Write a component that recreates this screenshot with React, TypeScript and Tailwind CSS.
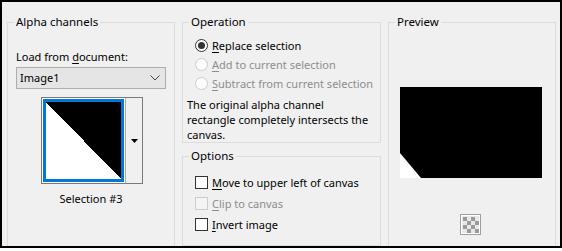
import React from "react";

function Radio({ checked, disabled, label, u }: { checked?: boolean; disabled?: boolean; label: string; u: number }) {
  return (
    <div className="flex items-center h-[19px] pl-[12px] whitespace-nowrap">
      <span
        className={
          "shrink-0 w-[13px] h-[13px] rounded-full border flex items-center justify-center " +
          (disabled ? "border-[#cccccc] bg-[#fcfcfc]" : "border-[#333333] bg-white")
        }
      >
        {checked && <span className="w-[7px] h-[7px] rounded-full bg-[#333333]" />}
      </span>
      <span className={"ml-[4px] " + (disabled ? "text-[#8d8d8d]" : "text-black")}>
        <span className="underline underline-offset-[2px]">{label.slice(0, u)}</span>
        {label.slice(u)}
      </span>
    </div>
  );
}

function Check({ disabled, label }: { disabled?: boolean; label: string }) {
  return (
    <div className="flex items-center h-[21px] pl-[12px] whitespace-nowrap">
      <span
        className={
          "shrink-0 w-[13px] h-[13px] border " + (disabled ? "border-[#cccccc] bg-[#f4f4f4]" : "border-[#333333] bg-white")
        }
      />
      <span className={"ml-[4px] " + (disabled ? "text-[#8d8d8d]" : "text-black")}>
        <span className="underline underline-offset-[2px]">{label.slice(0, 1)}</span>
        {label.slice(1)}
      </span>
    </div>
  );
}

function Legend({ children }: { children: React.ReactNode }) {
  return <legend className="ml-[6px] px-[2px] leading-[16px] text-[11.5px]">{children}</legend>;
}

export default function App() {
  return (
    <div className="w-[562px] h-[251px] bg-white font-['Noto_Sans',sans-serif] text-[11px] leading-[16px] text-black">
      <div className="h-[248px] border-2 border-black bg-[#f0f0f0] overflow-hidden flex pl-[5px] pr-[4px] pt-[12px] gap-[7px]">
        {/* Alpha channels */}
        <fieldset className="w-[168px] h-[260px] shrink-0 border border-[#dcdcdc]">
          <Legend>Alpha channels</Legend>
          <div className="pl-[8px]">
            <div className="mt-[19px]">
              Load from <span className="underline underline-offset-[2px]">d</span>ocument:
            </div>
            <div className="mt-[2px] w-[150px] h-[22px] border border-[#adadad] bg-[#e5e5e5] flex items-center pl-[3px] pr-[5px] justify-between">
              <span>Image1</span>
              <svg width="10" height="6" viewBox="0 0 10 6">
                <polyline points="0.5,0.5 5,5 9.5,0.5" fill="none" stroke="#444" strokeWidth="1" />
              </svg>
            </div>
            <div className="mt-[8px] ml-[25px] w-[102px] h-[87px] border border-[#7a7a7a] bg-white flex">
              <div className="m-[1px] w-[81px] border-[3px] border-[#0078d7] bg-[linear-gradient(to_top_right,#ffffff_50%,#000000_50%)]" />
              <div className="flex-1 border-l border-[#adadad] bg-[#f0f0f0] flex items-center justify-center">
                <svg width="7" height="4" viewBox="0 0 7 4">
                  <polygon points="0,0 7,0 3.5,4" fill="#000" />
                </svg>
              </div>
            </div>
            <div className="mt-[7px] ml-[25px] w-[100px] text-center">Selection #3</div>
          </div>
        </fieldset>

        {/* Operation + Options */}
        <div className="w-[199px] shrink-0 flex flex-col">
          <fieldset className="h-[130px] border border-[#dcdcdc]">
            <Legend>Operation</Legend>
            <div className="mt-[6px]">
              <Radio checked label="Replace selection" u={1} />
              <Radio disabled label="Add to current selection" u={1} />
              <Radio disabled label="Subtract from current selection" u={1} />
            </div>
            <div className="pl-[4px] mt-[4px] leading-[15px] whitespace-nowrap">
              The original alpha channel
              <br />
              rectangle completely intersects the
              <br />
              canvas.
            </div>
          </fieldset>
          <fieldset className="mt-[5px] h-[120px] border border-[#dcdcdc]">
            <Legend>Options</Legend>
            <div className="mt-[8px]">
              <Check label="Move to upper left of canvas" />
              <Check disabled label="Clip to canvas" />
              <Check label="Invert image" />
            </div>
          </fieldset>
        </div>

        {/* Preview */}
        <fieldset className="w-[168px] h-[260px] shrink-0 border border-[#dcdcdc]">
          <Legend>Preview</Legend>
          <div className="mt-[57px] ml-[11px]">
            <svg width="142" height="91" viewBox="0 0 142 91" className="block">
              <rect width="142" height="91" fill="#000" />
              <polygon points="0,66 0,91 21,91" fill="#fff" />
            </svg>
          </div>
          <div className="mt-[36px] ml-[71px]">
            <svg width="21" height="21" viewBox="0 0 21 21" className="block">
              <rect x="0.5" y="0.5" width="20" height="20" fill="#fff" stroke="#a0a0a0" />
              <rect x="2" y="2" width="17" height="17" fill="#e8e8e8" />
              {[0, 1, 2, 3].map((r) =>
                [0, 1, 2, 3].map((c) =>
                  (r + c) % 2 === 0 ? (
                    <rect key={r + "-" + c} x={3 + c * 4} y={3 + r * 4} width="4" height="4" fill="#9a9a9a" />
                  ) : null
                )
              )}
            </svg>
          </div>
        </fieldset>
      </div>
    </div>
  );
}
